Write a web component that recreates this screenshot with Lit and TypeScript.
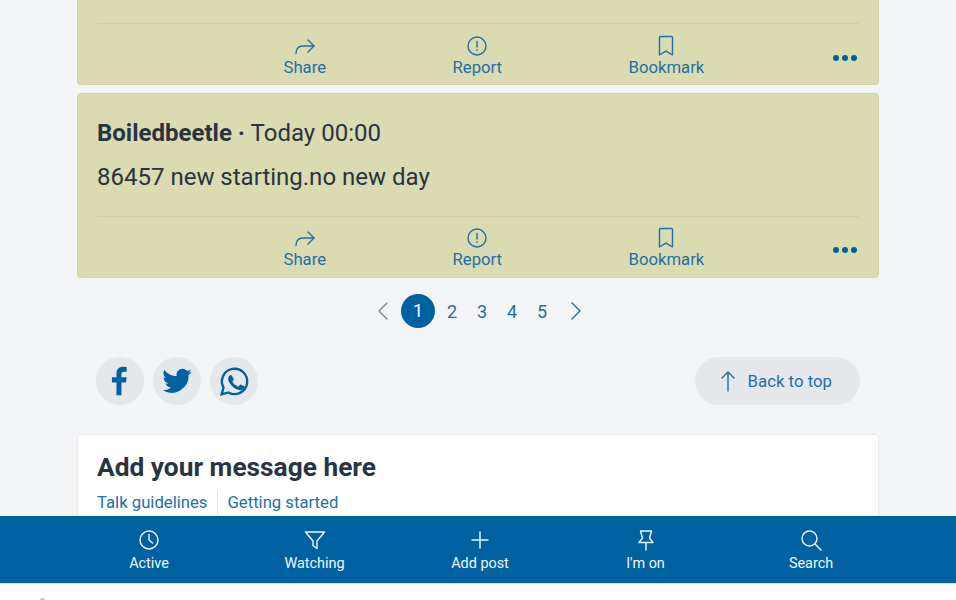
import {LitElement, html, css, svg} from 'lit';
import {customElement} from 'lit/decorators.js';

const stroke = (body: unknown, size = 24) => html`
  <svg width=${size} height=${size} viewBox="0 0 24 24" fill="none" stroke="currentColor"
    stroke-width="1.4" stroke-linecap="round" stroke-linejoin="round">${body}</svg>
`;

const icons = {
  share: stroke(svg`<path d="M3 19.500c0-4.500 2.500-7.500 6.500-7.500H21"/><path d="M15 6l6 6-6 6"/>`),
  report: stroke(svg`<circle cx="12" cy="12" r="9"/><path d="M12 7.500v5.500"/><path d="M12 16v.4"/>`),
  bookmark: stroke(svg`<path d="M5.500 3.500a1 1 0 0 1 1-1h11a1 1 0 0 1 1 1V21l-6.500-3.800L5.500 21z"/>`),
  clock: stroke(svg`<circle cx="12" cy="12" r="9"/><path d="M12 6.500V12l3.500 3"/>`),
  filter: stroke(svg`<path d="M2.500 4h19l-7.500 9v7.500l-4-3V13z"/>`),
  plus: stroke(svg`<path d="M12 4v16M4 12h16"/>`),
  pin: stroke(svg`<path d="M6.500 3h11l-2 7 3.500 4.500H5L8.500 10zM12 14.500V22"/>`),
  search: stroke(svg`<circle cx="10.500" cy="10.500" r="7.500"/><path d="M16 16l6 6"/>`),
  up: stroke(svg`<path d="M12 22V3M6 9l6-6 6 6"/>`),
};

@customElement('post-actions')
export class PostActions extends LitElement {
  static override styles = css`
    :host {
      display: block;
    }

    .actions {
      display: flex;
      align-items: flex-end;
      height: var(--actions-height, 61px);
      margin: 0 19px;
      border-top: 1px solid #cfcfa6;
      padding-left: 186.500px;
      gap: 126.500px;
      box-sizing: border-box;
      padding-bottom: 8px;
      color: #1f6fa8;
      font-size: 16.700px;
      line-height: 18px;
    }

    .action {
      display: flex;
      flex-direction: column;
      align-items: center;
    }

    .action svg {
      display: block;
      margin-bottom: 1px;
    }

    .dots {
      display: flex;
      gap: 3px;
      margin-left: auto;
      margin-right: 2.500px;
      margin-bottom: 16px;
    }

    .dots i {
      width: 6px;
      height: 6px;
      border-radius: 50%;
      background: #0061a1;
    }
  `;

  override render() {
    return html`
      <div class="actions">
        <span class="action">${icons.share}Share</span>
        <span class="action">${icons.report}Report</span>
        <span class="action">${icons.bookmark}Bookmark</span>
        <span class="dots"><i></i><i></i><i></i></span>
      </div>
    `;
  }
}

@customElement('app-root')
export class AppRoot extends LitElement {
  static override styles = css`
    :host {
      display: flex;
      flex-direction: column;
      height: 600px;
      overflow: hidden;
      background: #fff;
      font-family: Roboto, sans-serif;
      color: #283442;
    }

    .page {
      flex: 1;
      min-height: 0;
      overflow: hidden;
      background: #f3f4f6;
      padding: 0 77px;
    }

    .card {
      background: #dbdbb1;
      border: 1px solid #d3d3aa;
      border-radius: 4px;
      box-sizing: border-box;
    }

    .first {
      height: 85px;
      border-top: 0;
      border-radius: 0 0 4px 4px;
      padding-top: 23px;
      margin-bottom: 8px;
      --actions-height: 62px;
    }

    .second {
      height: 185px;
    }

    .body {
      height: 122px;
      padding: 25px 19px 0;
      box-sizing: border-box;
    }

    .title {
      font-size: 24px;
      line-height: 28px;
    }

    .title b {
      font-weight: 700;
    }

    .text {
      margin-top: 16px;
      font-size: 24px;
      line-height: 28px;
    }

    .pager {
      display: flex;
      justify-content: center;
      align-items: center;
      height: 34px;
      margin-top: 16px;
      padding-left: 3px;
      color: #1f6fa8;
      font-size: 18px;
    }

    .pager .num {
      width: 30px;
      text-align: center;
    }

    .pager .current {
      width: 34px;
      height: 34px;
      line-height: 34px;
      border-radius: 50%;
      background: #0061a1;
      color: #fff;
      text-align: center;
      margin-right: 2px;
    }

    .pager svg {
      display: block;
    }

    .prev {
      color: #7c8496;
      margin-right: 5px;
    }

    .next {
      margin-left: 6px;
    }

    .tools {
      display: flex;
      align-items: center;
      justify-content: space-between;
      margin-top: 29px;
      padding: 0 19px;
    }

    .social {
      display: flex;
      gap: 9px;
    }

    .social span {
      display: flex;
      align-items: center;
      justify-content: center;
      width: 48px;
      height: 48px;
      border-radius: 50%;
      background: #e5e7eb;
      color: #0061a1;
    }

    .top {
      display: flex;
      align-items: center;
      gap: 8px;
      height: 48px;
      padding: 0 28px 0 21px;
      border-radius: 24px;
      background: #e5e7eb;
      color: #1f6fa8;
      font-size: 16.800px;
    }

    .top svg {
      display: block;
    }

    .compose {
      margin-top: 29px;
      height: 120px;
      padding: 16px 19px 0;
      box-sizing: border-box;
      background: #fff;
      border: 1px solid #e9eaee;
      border-radius: 4px;
    }

    h2 {
      margin: 0;
      font-size: 26.300px;
      line-height: 32px;
      font-weight: 700;
    }

    .links {
      display: flex;
      margin-top: 8px;
      color: #1f6fa8;
      font-size: 16.700px;
      line-height: 24px;
    }

    .links span + span {
      margin-left: 10px;
      padding-left: 9px;
      border-left: 1px solid #e3e4e8;
    }

    nav {
      display: flex;
      justify-content: center;
      height: 68px;
      box-sizing: border-box;
      flex: none;
      background: #0061a1;
      border-bottom: 1px solid #d5dde3;
      color: #f2f6fa;
      font-size: 14.400px;
      line-height: 16px;
      padding: 12px 0 0 4px;
    }

    nav a {
      display: flex;
      flex-direction: column;
      align-items: center;
      width: 165.500px;
      gap: 4px;
    }

    nav svg {
      display: block;
    }

    .foot {
      flex: none;
      height: 16px;
      padding: 14px 0 0 40px;
      box-sizing: border-box;
      background: #fff;
    }

    .foot i {
      display: block;
      width: 5px;
      height: 2px;
      border-radius: 3px 3px 0 0;
      background: #c4c6ca;
    }
  `;

  override render() {
    return html`
      <div class="page">
        <div class="card first"><post-actions></post-actions></div>
        <div class="card second">
          <div class="body">
            <div class="title"><b>Boiledbeetle ·</b> Today 00:00</div>
            <div class="text">86457 new starting.no new day</div>
          </div>
          <post-actions></post-actions>
        </div>
        <div class="pager">
          <span class="prev">${stroke(svg`<path d="M15 4l-8 8 8 8"/>`)}</span>
          <span class="current">1</span>
          <span class="num">2</span>
          <span class="num">3</span>
          <span class="num">4</span>
          <span class="num">5</span>
          <span class="next">${stroke(svg`<path d="M9 4l8 8-8 8"/>`)}</span>
        </div>
        <div class="tools">
          <div class="social">
            <span>
              <svg width="34" height="34" viewBox="1 0 24 24" fill="currentColor">
                <path d="M14 22v-9h3.200l.5-3.600H14V7.200c0-1 .3-1.700 1.800-1.700h1.900V2.300C17.400 2.200 16.300 2 15.100 2 12.400 2 10.500 3.700 10.500 6.700v2.700H7.300V13h3.200v9z"/>
              </svg>
            </span>
            <span>
              <svg width="32" height="32" viewBox="0 0 24 24" fill="currentColor">
                <path d="M23 5.100c-.8.400-1.700.6-2.600.7.900-.6 1.600-1.400 2-2.500-.9.500-1.800.9-2.900 1.100a4.500 4.500 0 0 0-7.700 4.100C8 8.300 4.700 6.500 2.500 3.800c-1.200 2.100-.6 4.700 1.400 6-.7 0-1.400-.2-2-.6 0 2.200 1.500 4.100 3.600 4.500-.7.200-1.400.2-2 .1.600 1.800 2.200 3 4.200 3.100A9 9 0 0 1 1 18.800a12.800 12.800 0 0 0 19.700-11.400c.9-.6 1.700-1.400 2.300-2.300z"/>
              </svg>
            </span>
            <span>
              <svg width="31" height="31" viewBox="0 0 24 24" fill="none">
                <path fill="none" stroke="currentColor" stroke-width="1.800" d="M2 22l1.500-5.300A9.800 9.800 0 1 1 7.300 20.500z"/>
                <path fill="currentColor" d="M9.200 6.900c-.3 0-.7.100-1 .5-.4.400-1.100 1.200-1.100 2.700s1.100 3 1.300 3.200c.2.200 2.200 3.500 5.400 4.700 2.600 1 3.200.8 3.700.7.600-.1 1.800-.7 2-1.400.3-.7.300-1.300.2-1.400-.1-.1-.3-.2-.6-.4l-2.100-1c-.3-.1-.5-.2-.7.100-.2.300-.8 1-1 1.200-.2.200-.4.200-.7.100-.3-.2-1.300-.5-2.400-1.500-.9-.8-1.500-1.800-1.700-2.100-.2-.3 0-.5.100-.6l.5-.6c.2-.2.200-.3.300-.5.100-.2 0-.4 0-.6L10 7.500c-.2-.5-.5-.6-.8-.6z"/>
              </svg>
            </span>
          </div>
          <div class="top">${icons.up}<span>Back to top</span></div>
        </div>
        <div class="compose">
          <h2>Add your message here</h2>
          <div class="links"><span>Talk guidelines</span><span>Getting started</span></div>
        </div>
      </div>
      <nav>
        <a>${icons.clock}Active</a>
        <a>${icons.filter}Watching</a>
        <a>${icons.plus}Add post</a>
        <a>${icons.pin}I'm on</a>
        <a>${icons.search}Search</a>
      </nav>
      <div class="foot"><i></i></div>
    `;
  }
}
